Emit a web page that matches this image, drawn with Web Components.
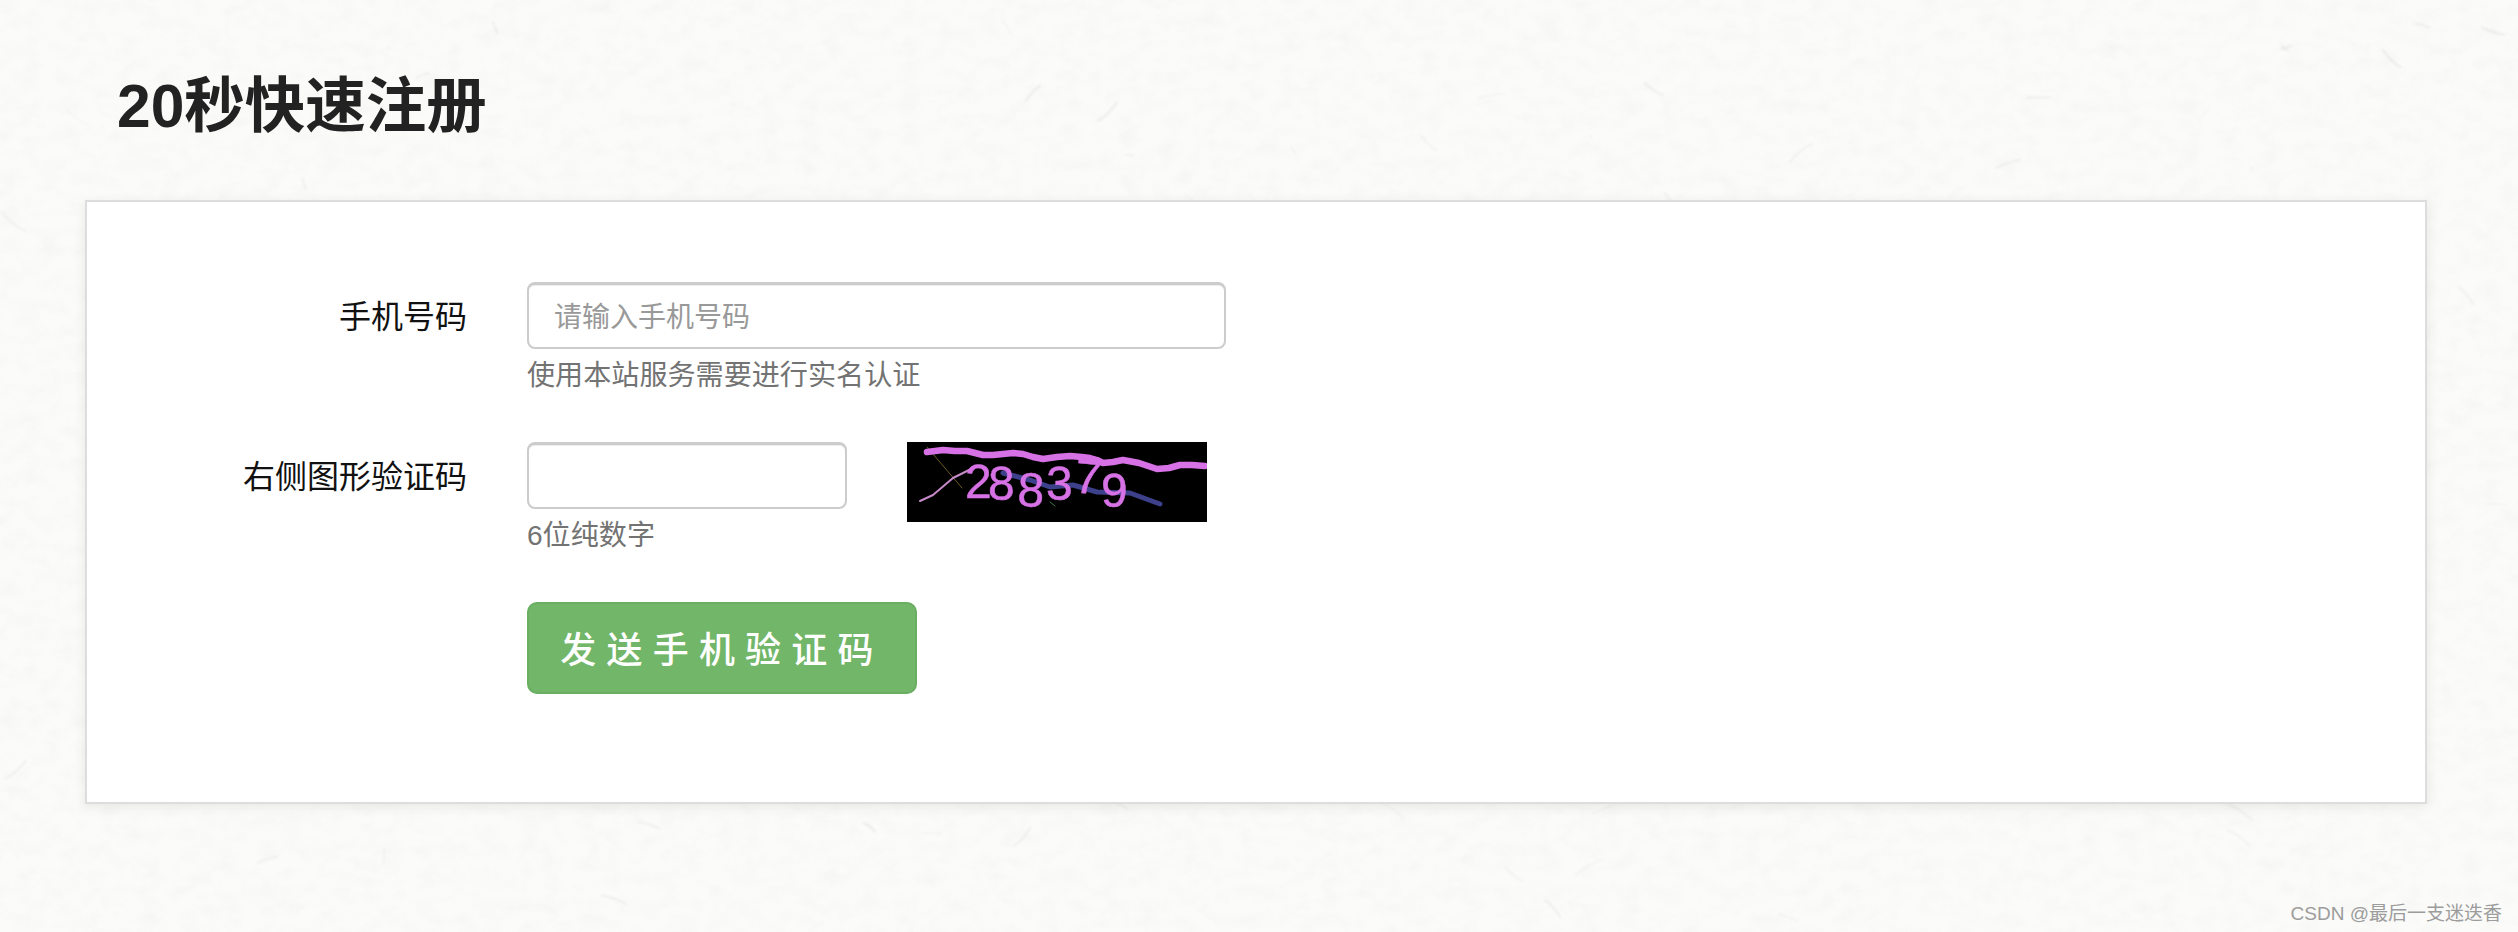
<!DOCTYPE html>
<html lang="zh-CN">
<head>
<meta charset="utf-8">
<title>20秒快速注册</title>
<style>
  html, body { margin: 0; height: 100%; }
  body { font-family: "Liberation Sans", "Noto Sans CJK SC", sans-serif; }
</style>
</head>
<body>
<paper-page>
  <page-title>20秒快速注册</page-title>
  <form-card>
    <form-row label="手机号码" hint="使用本站服务需要进行实名认证">
      <text-field placeholder="请输入手机号码" width="699"></text-field>
    </form-row>
    <form-row label="右侧图形验证码" hint="6位纯数字">
      <text-field width="320"></text-field>
      <captcha-image slot="aside"></captcha-image>
    </form-row>
    <form-row>
      <green-button>发送手机验证码</green-button>
    </form-row>
  </form-card>
  <water-mark>CSDN @最后一支迷迭香</water-mark>
</paper-page>

<script>
// paper background: noise plus a few seeded fibres
function paperSvg() {
  let seed = 7;
  const rnd = () => (seed = (seed * 16807) % 2147483647) / 2147483647;
  let fibres = '';
  for (let i = 0; i < 130; i++) {
    const x = rnd() * 2518, y = rnd() * 932;
    const dx = (rnd() - 0.5) * 60, dy = (rnd() - 0.5) * 40;
    fibres += `<path d="M${x} ${y}q${dx / 2} ${dy / 4} ${dx} ${dy}" stroke="#b5b3ae" stroke-opacity="${0.08 + rnd() * 0.16}" stroke-width="${1 + rnd()}" fill="none"/>`;
  }
  return `<svg xmlns="http://www.w3.org/2000/svg" width="2518" height="932">
    <filter id="n" x="0" y="0" width="100%" height="100%">
      <feTurbulence type="fractalNoise" baseFrequency="0.05 0.07" numOctaves="5" seed="11"/>
      <feColorMatrix values="0 0 0 0 0.55 0 0 0 0 0.54 0 0 0 0 0.52 0.5 0.5 0 0 -0.42"/>
    </filter>
    <rect width="2518" height="932" fill="#fbfbf9"/>
    <rect width="2518" height="932" filter="url(#n)" opacity="0.2"/>
    <g filter="blur(1px)">${fibres}</g>
  </svg>`;
}

class PaperPage extends HTMLElement {
  constructor() {
    super();
    this.attachShadow({ mode: 'open' }).innerHTML = `
      <style>
        :host {
          display: flex;
          flex-direction: column;
          position: relative;
          box-sizing: border-box;
          height: 932px;
          padding: 0 91px 0 85px;
          background: #fbfbf9 url("data:image/svg+xml,${encodeURIComponent(paperSvg())}") no-repeat;
          overflow: hidden;
        }
      </style>
      <slot></slot>`;
  }
}

class PageTitle extends HTMLElement {
  constructor() {
    super();
    this.attachShadow({ mode: 'open' }).innerHTML = `
      <style>
        :host {
          display: block;
          height: 200px;
          box-sizing: border-box;
          padding: 64px 0 0 32px;
          font-size: 60.5px;
          line-height: 84px;
          font-weight: 700;
          color: #222;
        }
      </style>
      <slot></slot>`;
  }
}

class FormCard extends HTMLElement {
  constructor() {
    super();
    this.attachShadow({ mode: 'open' }).innerHTML = `
      <style>
        :host {
          display: flex;
          flex-direction: column;
          gap: 48px;
          box-sizing: border-box;
          height: 604px;
          padding-top: 80px;
          background: #fff;
          border: 2px solid #ddd;
          box-shadow: 0 3px 12px rgba(0, 0, 0, .08);
        }
      </style>
      <slot></slot>`;
  }
}

class FormRow extends HTMLElement {
  constructor() {
    super();
    const label = this.getAttribute('label') || '';
    const hint = this.getAttribute('hint');
    this.attachShadow({ mode: 'open' }).innerHTML = `
      <style>
        :host {
          display: grid;
          grid-template-columns: 380px auto;
          column-gap: 60px;
          align-items: start;
        }
        .label {
          padding-top: 3px;
          height: 64px;
          line-height: 64px;
          text-align: right;
          font-size: 32px;
          color: #111;
        }
        .controls { display: flex; align-items: flex-start; gap: 60px; }
        .hint {
          margin-top: 8px;
          font-size: 28.1px;
          line-height: 37px;
          color: #737373;
        }
      </style>
      <div class="label">${label}</div>
      <div class="controls">
        <div>
          <slot></slot>
          ${hint ? `<div class="hint">${hint}</div>` : ''}
        </div>
        <slot name="aside"></slot>
      </div>`;
  }
}

class TextField extends HTMLElement {
  constructor() {
    super();
    const ph = this.getAttribute('placeholder') || '';
    const w = this.getAttribute('width');
    this.attachShadow({ mode: 'open' }).innerHTML = `
      <style>
        :host { display: block; width: ${w}px; height: 67px; }
        input {
          box-sizing: border-box;
          width: 100%;
          height: 100%;
          padding: 3px 24px 0 25px;
          border: 2px solid #ccc;
          border-top-width: 3px;
          border-radius: 8px;
          background: #fff;
          box-shadow: inset 0 1px 1px rgba(0, 0, 0, .075);
          font: 28px "Liberation Sans", "Noto Sans CJK SC", sans-serif;
          outline: none;
        }
        input::placeholder { color: #999; opacity: 1; }
      </style>
      <input type="text" placeholder="${ph}">`;
  }
}

class CaptchaImage extends HTMLElement {
  constructor() {
    super();
    this.attachShadow({ mode: 'open' }).innerHTML = `
      <style>
        :host { display: block; width: 300px; height: 80px; background: #000; }
        svg { display: block; }
        text { font: 48px "Liberation Sans", sans-serif; }
      </style>
      <svg width="300" height="80" viewBox="0 0 300 80">
        <filter id="soft"><feGaussianBlur stdDeviation=".7"/></filter>
        <g filter="url(#soft)" fill="none" stroke-linecap="round" stroke-linejoin="round">
          <path d="M20 5L55 46" stroke="#6b5a20" stroke-width="1"/>
          <path d="M143 60L148 64" stroke="#3f7a4a" stroke-width="1"/>
          <path d="M96 31L123 38L143 45L166 43L190 50L223 51L253 62" stroke="#3c3f8a" stroke-width="5"/>
          <path d="M13 59L26 53L46 36L66 26" stroke="#c58ac8" stroke-width="2"/>
          <text x="58 81 110 139 166 194" y="56 58 64 58 50 65" rotate="0 0 2 0 6 0" fill="#d772e6" stroke="#d772e6" stroke-width=".5">288379</text>
          <path d="M20 10L28 9L36 8L48 9L60 9L68 11L76 13L86 13L96 12L106 11L116 12L126 15L136 17L150 15L163 14L175 15L183 16L190 18L196 21L206 20L216 18L232 21L250 27L262 26L273 23L285 23L298 24" stroke="#d772e6" stroke-width="6.5"/>
        </g>
      </svg>`;
  }
}

class GreenButton extends HTMLElement {
  constructor() {
    super();
    this.attachShadow({ mode: 'open' }).innerHTML = `
      <style>
        :host { display: block; width: 390px; height: 92px; }
        button {
          box-sizing: border-box;
          width: 100%;
          height: 100%;
          padding: 0 0 3px;
          background: #72b669;
          border: 2px solid #6aae61;
          border-radius: 10px;
          color: #fff;
          font: 500 36px "Liberation Sans", "Noto Sans CJK SC", sans-serif;
          letter-spacing: 10.2px;
          white-space: nowrap;
        }
      </style>
      <button type="button"><slot></slot></button>`;
  }
}

class WaterMark extends HTMLElement {
  constructor() {
    super();
    this.attachShadow({ mode: 'open' }).innerHTML = `
      <style>
        :host {
          position: absolute;
          right: 16px;
          bottom: 5px;
          font-size: 19px;
          line-height: 26px;
          color: #9c9c9c;
        }
      </style>
      <slot></slot>`;
  }
}

customElements.define('paper-page', PaperPage);
customElements.define('page-title', PageTitle);
customElements.define('form-card', FormCard);
customElements.define('form-row', FormRow);
customElements.define('text-field', TextField);
customElements.define('captcha-image', CaptchaImage);
customElements.define('green-button', GreenButton);
customElements.define('water-mark', WaterMark);
</script>
</body>
</html>
